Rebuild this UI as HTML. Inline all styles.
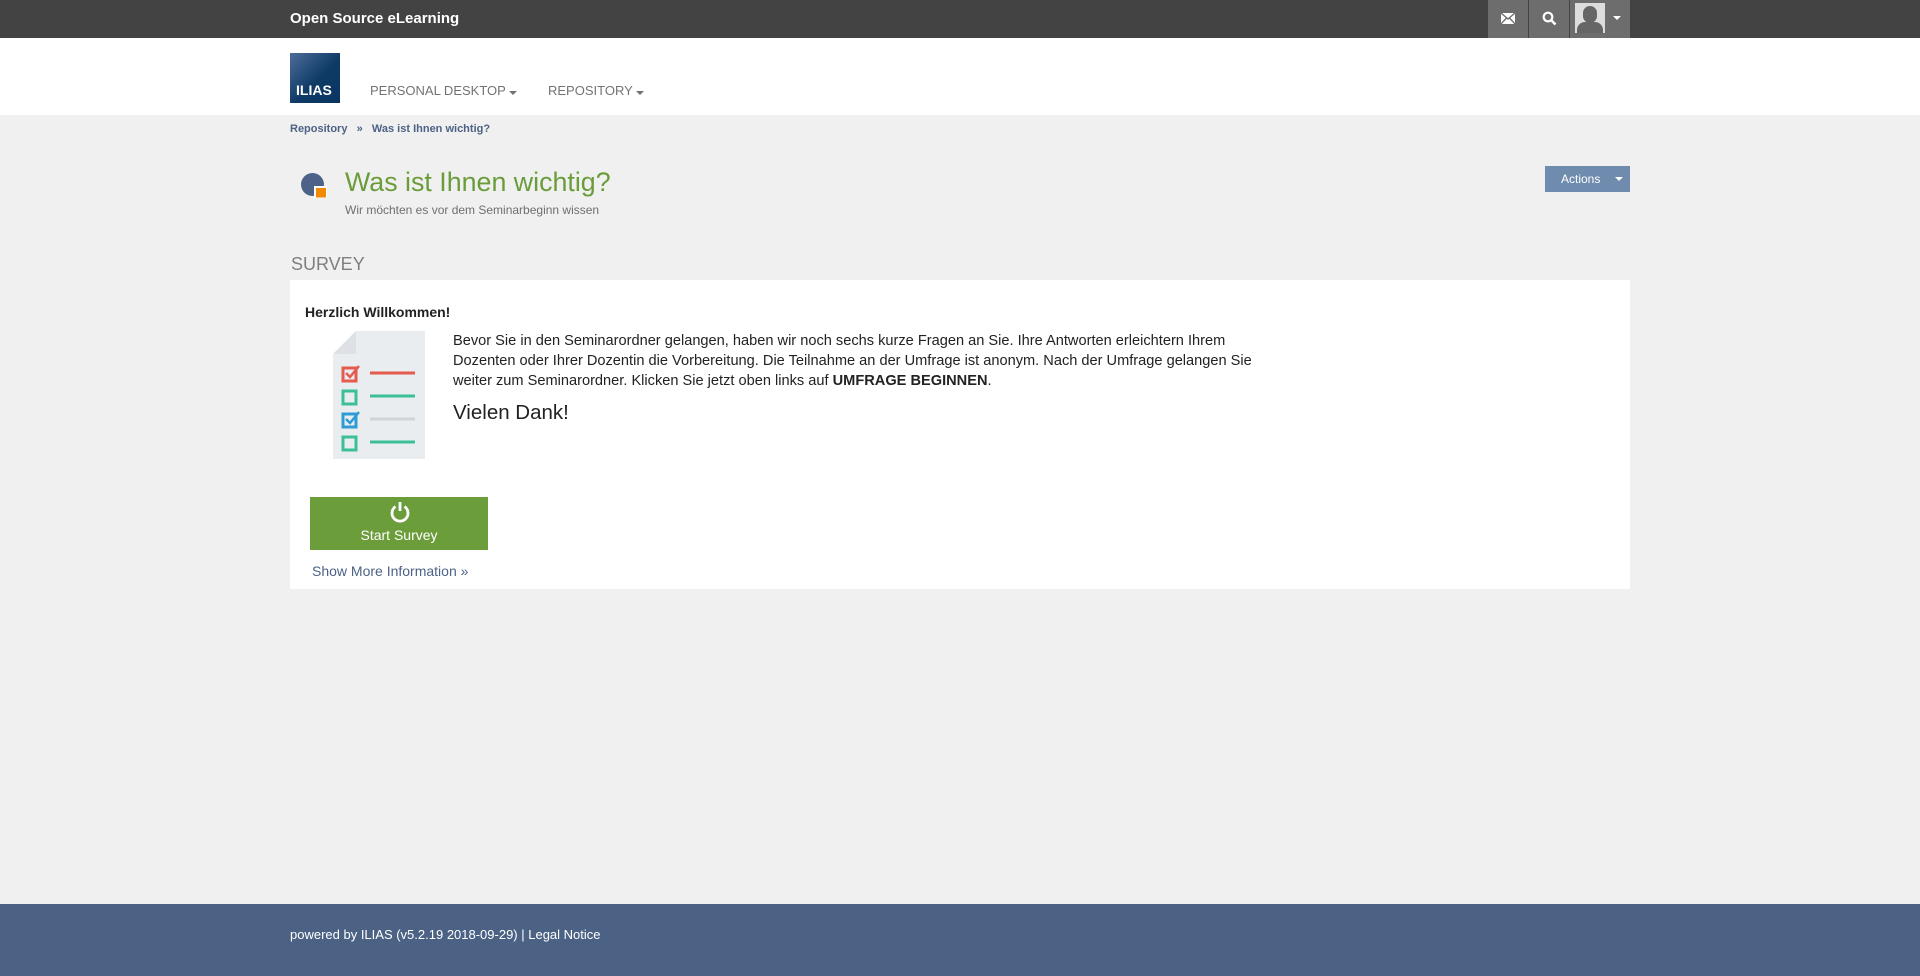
<!DOCTYPE html>
<html><head><meta charset="utf-8"><style>
*{margin:0;padding:0;box-sizing:border-box}
body{width:1920px;height:976px;background:#f0f0f0;font-family:"Liberation Sans",sans-serif;position:relative;overflow:hidden;color:#161616}
.a{position:absolute;white-space:nowrap}
</style></head><body>
<div class="a" style="left:0;top:0;width:1920px;height:38px;background:#434343"></div>
<div class="a" style="left:290px;top:10px;color:#fff;font-size:15px;font-weight:bold">Open Source eLearning</div>
<div class="a" style="left:1488px;top:0;width:40px;height:38px;background:#6d6d6d"></div>
<div class="a" style="left:1529px;top:0;width:40px;height:38px;background:#6d6d6d"></div>
<div class="a" style="left:1570px;top:0;width:60px;height:38px;background:#6d6d6d"></div>
<svg class="a" style="left:1501px;top:13px" width="14" height="11" viewBox="0 0 14 11"><rect width="14" height="11" fill="#fff"/><path d="M0 0L7 6L14 0M0 11L5.5 5M14 11L8.5 5" stroke="#6d6d6d" stroke-width="1.3" fill="none"/></svg>
<svg class="a" style="left:1542px;top:11px" width="15" height="15" viewBox="0 0 15 15"><circle cx="6" cy="6" r="4.3" stroke="#fff" stroke-width="2.2" fill="none"/><path d="M9 9L13.5 13.5" stroke="#fff" stroke-width="2.6"/></svg>
<div class="a" style="left:1575px;top:3px;width:30px;height:30px;background:#ddd;overflow:hidden"><div class="a" style="left:8px;top:3px;width:14px;height:17px;border-radius:7px;background:#666"></div><div class="a" style="left:2px;top:19px;width:26px;height:14px;border-radius:8px 8px 0 0;background:#666"></div></div>
<div class="a" style="left:1613px;top:16px;border:4px solid transparent;border-top:4px solid #fff"></div>

<div class="a" style="left:0;top:38px;width:1920px;height:77px;background:#fff"></div>
<div class="a" style="left:290px;top:53px;width:50px;height:50px;background:linear-gradient(135deg,#4d6d9a,#0e3a66 55%,#0a3562)"></div>
<div class="a" style="left:296px;top:82px;color:#fff;font-weight:bold;font-size:14px">ILIAS</div>
<div class="a" style="left:370px;top:83px;color:#737373;font-size:13px">PERSONAL DESKTOP <span style="display:inline-block;border:4px solid transparent;border-top-color:#737373;vertical-align:-4px"></span></div>
<div class="a" style="left:548px;top:83px;color:#737373;font-size:13px">REPOSITORY <span style="display:inline-block;border:4px solid transparent;border-top-color:#737373;vertical-align:-4px"></span></div>

<div class="a" style="left:290px;top:123px;color:#4c6286;font-size:11px;font-weight:bold">Repository &nbsp;&nbsp;»&nbsp;&nbsp; Was ist Ihnen wichtig?</div>
<svg class="a" style="left:300px;top:172px" width="27" height="26" viewBox="0 0 27 26"><circle cx="12.5" cy="12.5" r="11.5" fill="#4c6286"/><rect x="14" y="14" width="13" height="12" fill="#fff"/><path d="M16 16H26V25.5H16Z" fill="#f08a00"/></svg>
<div class="a" style="left:345px;top:167px;color:#6b9c3a;font-size:26.8px">Was ist Ihnen wichtig?</div>
<div class="a" style="left:345px;top:203px;color:#6f6f6f;font-size:12px">Wir möchten es vor dem Seminarbeginn wissen</div>
<div class="a" style="left:1545px;top:166px;width:85px;height:26px;background:#6f8bae"></div>
<div class="a" style="left:1561px;top:172px;color:#fff;font-size:12px">Actions</div>
<div class="a" style="left:1615px;top:177px;border:4px solid transparent;border-top-color:#fff"></div>

<div class="a" style="left:291px;top:254px;color:#7f7f7f;font-size:18px">SURVEY</div>
<div class="a" style="left:290px;top:280px;width:1340px;height:309px;background:#fff"></div>
<div class="a" style="left:305px;top:304px;font-size:14px;font-weight:bold;color:#222">Herzlich Willkommen!</div>
<svg class="a" style="left:333px;top:331px" width="93" height="128" viewBox="0 0 93 128"><path d="M23 0H92V128H0V23Z" fill="#e9edf0"/><path d="M0 23L23 0V23Z" fill="#dde1e5"/><rect x="10" y="37" width="13" height="13" fill="none" stroke="#e55b4d" stroke-width="3"/><path d="M13 42l4 4l9-11" stroke="#e55b4d" stroke-width="2.5" fill="none"/><path d="M37 42H82" stroke="#e55b4d" stroke-width="3"/><rect x="10" y="60" width="13" height="13" fill="none" stroke="#3cbf97" stroke-width="3"/><path d="M37 65H82" stroke="#3cbf97" stroke-width="3"/><rect x="10" y="83" width="13" height="13" fill="none" stroke="#2e9bd6" stroke-width="3"/><path d="M13 88l4 4l9-11" stroke="#2e9bd6" stroke-width="2.5" fill="none"/><path d="M37 88H82" stroke="#d0d4d8" stroke-width="3"/><rect x="10" y="106" width="13" height="13" fill="none" stroke="#3cbf97" stroke-width="3"/><path d="M37 111H82" stroke="#3cbf97" stroke-width="3"/></svg>
<div class="a" style="left:453px;top:331px;font-size:14.6px;line-height:20px;color:#222">Bevor Sie in den Seminarordner gelangen, haben wir noch sechs kurze Fragen an Sie. Ihre Antworten erleichtern Ihrem<br>Dozenten oder Ihrer Dozentin die Vorbereitung. Die Teilnahme an der Umfrage ist anonym. Nach der Umfrage gelangen Sie<br>weiter zum Seminarordner. Klicken Sie jetzt oben links auf <b>UMFRAGE BEGINNEN</b>.</div>
<div class="a" style="left:453px;top:401px;font-size:20.5px;color:#222">Vielen Dank!</div>
<div class="a" style="left:310px;top:497px;width:178px;height:53px;background:#6c9d3b"></div>
<svg class="a" style="left:388px;top:500px" width="24" height="24" viewBox="0 0 24 24"><path d="M7.5 6.5A8 8 0 1 0 16.5 6.5" stroke="#fff" stroke-width="2.8" fill="none"/><path d="M12 2V11" stroke="#fff" stroke-width="2.8"/></svg>
<div class="a" style="left:310px;top:527px;width:178px;text-align:center;color:#fff;font-size:14px">Start Survey</div>
<div class="a" style="left:312px;top:563px;color:#4c6286;font-size:14px">Show More Information »</div>

<div class="a" style="left:0;top:904px;width:1920px;height:72px;background:#4b6285"></div>
<div class="a" style="left:290px;top:927px;color:#fff;font-size:13px">powered by ILIAS (v5.2.19 2018-09-29) | Legal Notice</div>
</body></html>
